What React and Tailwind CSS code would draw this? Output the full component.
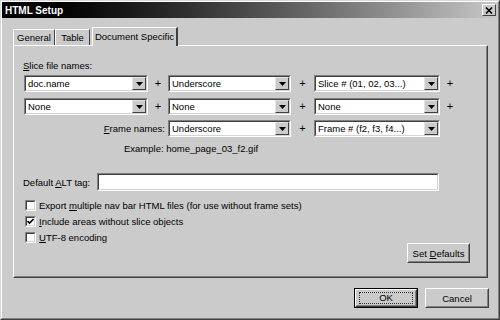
import React from "react";

function Arrow() {
  return (
    <div className="w-[14px] h-full bg-[#cbcbcb] border border-t-[#e4e4e4] border-l-[#e4e4e4] border-r-[#404040] border-b-[#404040] flex items-center justify-center">
      <svg width="7" height="4" viewBox="0 0 7 4">
        <polygon points="0,0 7,0 3.5,4" fill="#000" />
      </svg>
    </div>
  );
}

function Combo({ text, w }) {
  return (
    <div className={`${w} h-[17px] border border-t-[#808080] border-l-[#808080] border-r-white border-b-white`}>
      <div className="h-full flex bg-white border border-t-[#404040] border-l-[#404040] border-r-[#d4d4d4] border-b-[#d4d4d4]">
        <div className="flex-1 pl-[2px] leading-[13px] whitespace-nowrap overflow-hidden">{text}</div>
        <Arrow />
      </div>
    </div>
  );
}

function Plus() {
  return <div className="flex items-center justify-center h-[17px] text-[11px]">+</div>;
}

function Check({ checked, children }) {
  return (
    <div className="h-[16px] flex items-center">
      <div className="ml-px w-[11px] h-[11px] border border-t-[#808080] border-l-[#808080] border-r-white border-b-white">
        <div className="w-full h-full bg-white border border-t-[#404040] border-l-[#404040] border-r-[#d4d4d4] border-b-[#d4d4d4] flex items-center justify-center">
          {checked && (
            <svg width="7" height="7" viewBox="0 0 7 7">
              <path d="M0.5 3 L2.5 5 L6.5 1" stroke="#000" strokeWidth="1.6" fill="none" />
            </svg>
          )}
        </div>
      </div>
      <div className="ml-[3px] whitespace-nowrap">{children}</div>
    </div>
  );
}

function Btn({ children, w, def }) {
  if (def) {
    return (
      <div className={`${w} h-[20px] border border-black`}>
        <div className="h-full border border-t-white border-l-white border-r-[#404040] border-b-[#404040]">
          <div className="h-full border border-transparent border-r-[#808080] border-b-[#808080] px-[2px] py-px">
            <div className="h-full border border-dotted border-[#303030] flex items-center justify-center leading-[10px]"><span>{children}</span></div>
          </div>
        </div>
      </div>
    );
  }
  return (
    <div className={`${w} h-[20px] border border-t-white border-l-white border-r-[#404040] border-b-[#404040]`}>
      <div className="h-full border border-transparent border-r-[#808080] border-b-[#808080] flex items-center justify-center"><span>{children}</span></div>
    </div>
  );
}

export default function App() {
  return (
    <div className="w-[500px] h-[320px] bg-[#cbcbcb] font-['Liberation_Sans',Arial,sans-serif] text-[9.5px] leading-[11px] text-black border border-t-[#d8d8d8] border-l-[#d8d8d8] border-r-[#404040] border-b-[#404040]">
      <div className="h-full flex flex-col border border-t-white border-l-white border-r-[#808080] border-b-[#808080]">
        {/* title bar */}
        <div className="h-[16px] flex items-center bg-linear-to-r from-[#000000] to-[#c8c8c8]">
          <div className="pl-[3px] text-white font-bold text-[10px] flex-1">HTML Setup</div>
          <div className="mr-[2px] w-[14px] h-[12px] bg-[#cbcbcb] border border-t-white border-l-white border-r-[#404040] border-b-[#404040] flex items-center justify-center">
            <svg width="8" height="7" viewBox="0 0 8 7">
              <path d="M1 0.5 L7 6.5 M7 0.5 L1 6.5" stroke="#000" strokeWidth="1.6" />
            </svg>
          </div>
        </div>

        {/* tabs */}
        <div className="mt-[9px] pl-[11px] flex items-end h-[18px] relative z-10">
          <div className="w-[42px] h-[16px] border-t border-l border-t-white border-l-white border-r border-r-[#404040] flex items-center justify-center">General</div>
          <div className="w-[35px] h-[16px] border-t border-l border-t-white border-l-white border-r border-r-[#404040] flex items-center justify-center">Table</div>
          <div className="ml-[2px] w-[86px] h-[19px] -mb-px bg-[#cbcbcb] border-t border-l border-t-white border-l-white border-r-2 border-r-[#404040] flex items-start justify-center pt-[3px]">Document Specific</div>
        </div>

        {/* panel */}
        <div className="ml-[11px] mr-[10px] h-[233px] border border-t-white border-l-white border-r-[#404040] border-b-[#404040]">
          <div className="h-full border border-transparent border-r-[#808080] border-b-[#808080] pl-[9px] pt-[13px] flex flex-col">
            <div className="-ml-px"><span className="underline">S</span>lice file names:</div>
            <div className="mt-[4px] grid grid-cols-[124px_20px_123px_23px_126px_20px] gap-y-[6px]">
              <Combo w="w-[124px]" text="doc.name" />
              <Plus />
              <Combo w="w-[123px]" text="Underscore" />
              <Plus />
              <Combo w="w-[126px]" text="Slice # (01, 02, 03...)" />
              <Plus />
              <Combo w="w-[124px]" text="None" />
              <Plus />
              <Combo w="w-[123px]" text="None" />
              <Plus />
              <Combo w="w-[126px]" text="None" />
              <Plus />
            </div>
            <div className="mt-[5px] grid grid-cols-[144px_123px_23px_126px]">
              <div className="flex items-center justify-end pr-[3px] h-[17px]"><span><span className="underline">F</span>rame names:</span></div>
              <Combo w="w-[123px]" text="Underscore" />
              <Plus />
              <Combo w="w-[126px]" text="Frame # (f2, f3, f4...)" />
            </div>
            <div className="mt-[6px] ml-[100px]">Example: home_page_03_f2.gif</div>
            <div className="mt-[19px] flex items-center h-[18px]">
              <div className="-ml-px w-[74px]">Default <span className="underline">A</span>LT tag:</div>
              <div className="w-[342px] h-full border border-t-[#808080] border-l-[#808080] border-r-white border-b-white">
                <div className="h-full bg-white border border-t-[#404040] border-l-[#404040] border-r-[#d4d4d4] border-b-[#d4d4d4]"></div>
              </div>
            </div>
            <div className="mt-[6px] flex flex-col">
              <Check>Export <span className="underline">m</span>ultiple nav bar HTML files (for use without frame sets)</Check>
              <Check checked><span className="underline">I</span>nclude areas without slice objects</Check>
              <Check><span className="underline">U</span>TF-8 encoding</Check>
            </div>
            <div className="-mt-[2px] flex justify-end pr-[16px]">
              <Btn w="w-[63px]">Set <span className="underline">D</span>efaults</Btn>
            </div>
          </div>
        </div>

        {/* bottom buttons */}
        <div className="mt-[10px] flex justify-end gap-[7px] pr-[9px]">
          <Btn w="w-[64px]" def>OK</Btn>
          <Btn w="w-[64px]">Cancel</Btn>
        </div>
      </div>
    </div>
  );
}
